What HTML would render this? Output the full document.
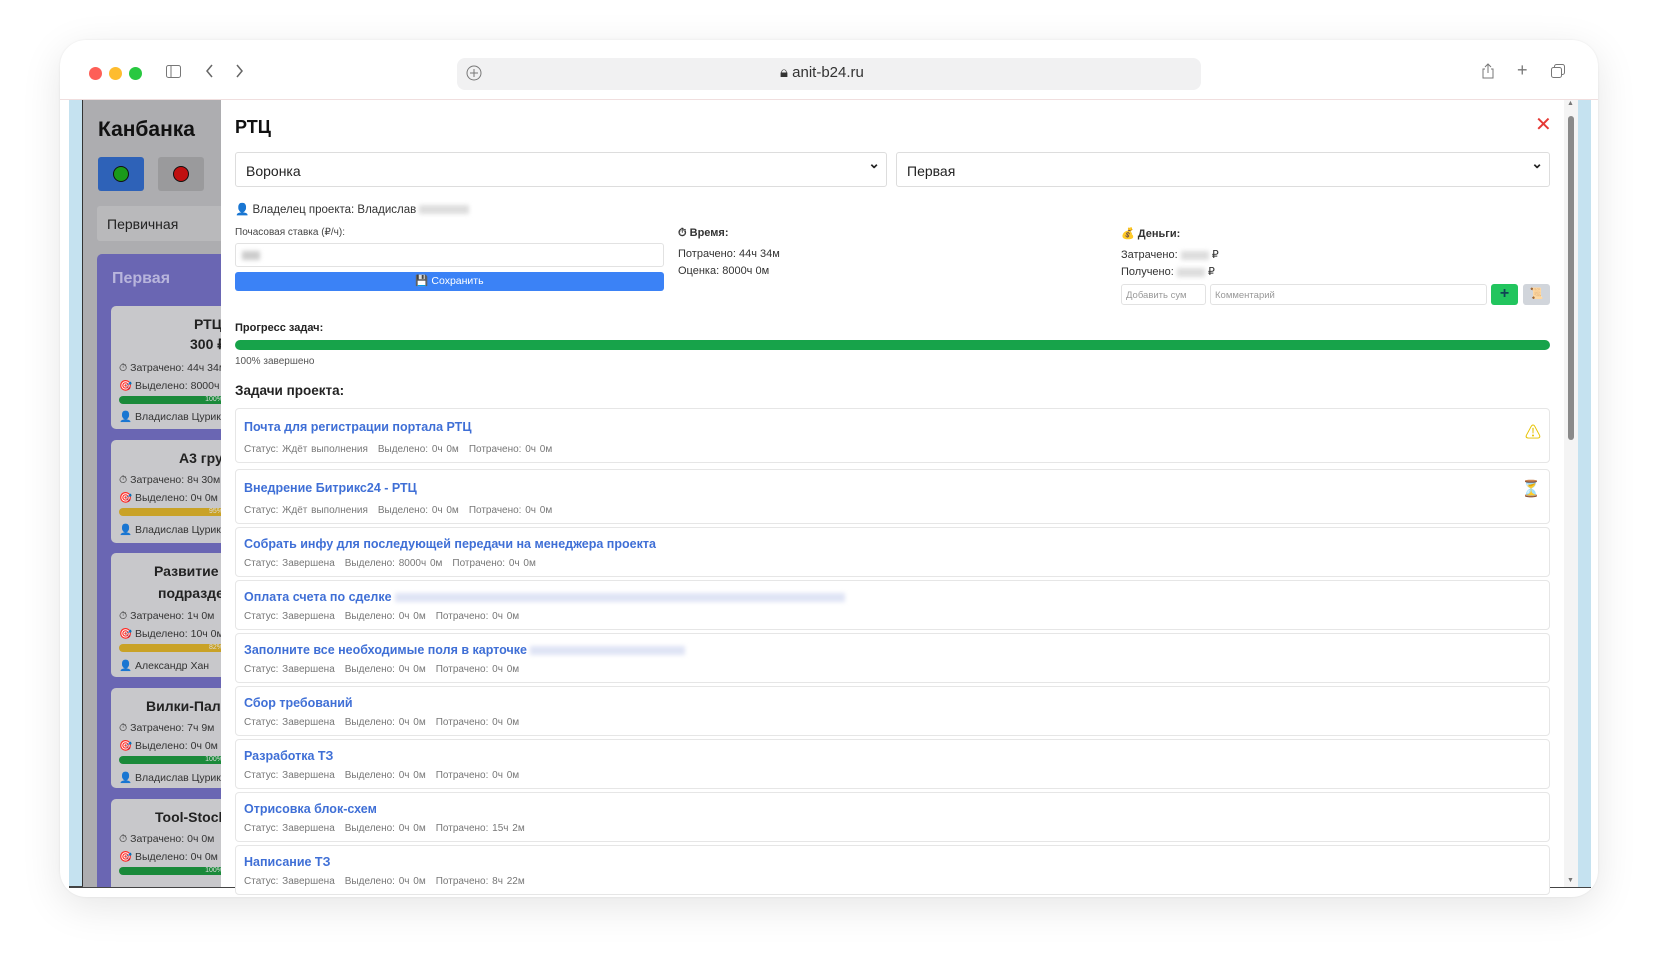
<!DOCTYPE html>
<html><head><meta charset="utf-8"><style>
*{box-sizing:border-box;margin:0;padding:0}
body{width:1656px;height:976px;background:#fff;font-family:"Liberation Sans","Noto Sans CJK SC",sans-serif;position:relative;overflow:hidden;color:#222}
.a{position:absolute}
.win{left:60px;top:40px;width:1538px;height:857px;border-radius:26px;background:#fff;box-shadow:0 10px 40px rgba(0,0,0,.10),0 0 2px rgba(0,0,0,.08);overflow:hidden}
.dot{width:13px;height:13px;border-radius:50%;top:67px}
.url{left:457px;top:58px;width:744px;height:32px;background:#f1f1f2;border-radius:8px}
.kb{left:83px;top:100px;width:138px;height:787px;background:#adadb0;overflow:hidden}
.card{position:absolute;left:28px;width:200px;background:#c8c8cb;border-radius:5px;font-size:10.5px;color:#333}
.card .t{position:absolute;font-weight:bold;font-size:14px;color:#222;white-space:nowrap}
.card .l{position:absolute;left:8px;white-space:nowrap}
.bar{position:absolute;left:8px;width:140px;height:8px;border-radius:4px;font-size:7px;color:#ddd;text-align:right;padding-right:36px;line-height:8px}
.modal{left:221px;top:100px;width:1357px;height:787px;background:#fff}
.sel{position:absolute;height:35px;border:1px solid #ddd;border-radius:3px;font-size:14px;padding:10px}
.sel:after{content:"⌄";position:absolute;right:6px;top:2px;font-size:14px;font-weight:bold}
.task{position:absolute;left:14px;width:1315px;border:1px solid #e6e6e6;border-radius:4px;background:#fff}
.task .n{position:absolute;left:8px;font-size:12.5px;color:#3f6fd6;font-weight:bold;white-space:nowrap}
.task .m{position:absolute;left:8px;font-size:10px;color:#777;white-space:nowrap;word-spacing:1px}
.m span{margin-right:10px}
.blur{display:inline-block;background:#dfe4f5;filter:blur(2px);height:9px;vertical-align:middle}
.s{font-size:11px;color:#333}
</style></head><body>
<div class="a win"></div>
<div class="a dot" style="left:89px;background:#fe5f57"></div>
<div class="a dot" style="left:109px;background:#febc2e"></div>
<div class="a dot" style="left:129px;background:#28c840"></div>
<svg class="a" style="left:166px;top:65px" width="15" height="13"><rect x=".5" y=".5" width="14" height="12" rx="2" fill="none" stroke="#777"/><line x1="5" y1="1" x2="5" y2="12" stroke="#777"/></svg>
<svg class="a" style="left:205px;top:64px" width="10" height="14"><path d="M7 1L2 7l5 6" fill="none" stroke="#666" stroke-width="1.5"/></svg>
<svg class="a" style="left:235px;top:64px" width="10" height="14"><path d="M2 1l5 6-5 6" fill="none" stroke="#666" stroke-width="1.5"/></svg>
<div class="a url"></div>
<svg class="a" style="left:466px;top:65px" width="16" height="16"><circle cx="8" cy="8" r="7" fill="none" stroke="#777"/><path d="M8 4v8M4 8h8" stroke="#777"/></svg>
<div class="a" style="left:780px;top:64px;font-size:15px;color:#333">🔒︎<span style="font-size:15px"> anit-b24.ru</span></div>
<svg class="a" style="left:1481px;top:63px" width="14" height="16"><path d="M4 6H2v9h10V6h-2M7 1v9M4 4l3-3 3 3" fill="none" stroke="#777"/></svg>
<div class="a" style="left:1517px;top:60px;font-size:18px;color:#777">+</div>
<svg class="a" style="left:1551px;top:64px" width="14" height="14"><rect x="3.5" y=".5" width="10" height="10" rx="2" fill="none" stroke="#777"/><rect x=".5" y="3.5" width="10" height="10" rx="2" fill="#fff" stroke="#777"/></svg>
<div class="a" style="left:60px;top:99px;width:1538px;height:1px;background:#f0dede"></div>
<div class="a" style="left:69px;top:100px;width:14px;height:787px;background:#c5e2f0"></div>
<div class="a" style="left:82px;top:100px;width:2px;height:787px;background:#333"></div>
<div class="a" style="left:69px;top:886px;width:1522px;height:2px;background:#444"></div>
<div class="a" style="left:1578px;top:100px;width:13px;height:787px;background:#c5e2f0"></div>
<div class="a kb">
 <div class="a" style="left:15px;top:18px;font-size:21px;font-weight:bold;color:#111">Канбанка</div>
 <div class="a" style="left:15px;top:57px;width:46px;height:34px;background:#2e62b8;border-radius:3px"><div class="a" style="left:15px;top:9px;width:16px;height:16px;border-radius:50%;background:#1a9a1a;border:1.5px solid #111"></div></div>
 <div class="a" style="left:75px;top:57px;width:46px;height:34px;background:#9a9a9c;border-radius:3px"><div class="a" style="left:15px;top:9px;width:16px;height:16px;border-radius:50%;background:#c01010;border:1.5px solid #111"></div></div>
 <div class="a" style="left:14px;top:106px;width:140px;height:35px;background:#b9b9bb;border-radius:3px;font-size:14px;padding:10px 10px;color:#222">Первичная</div>
 <div class="a" style="left:14px;top:154px;width:140px;height:700px;background:#6a66b3;border-radius:5px"></div>
 <div class="a" style="left:29px;top:170px;font-size:16px;font-weight:bold;color:#b8b5dc">Первая</div>
 <div class="card" style="top:206px;height:123px"><div class="t" style="top:10px;left:83px">РТЦ</div><div class="t" style="top:30px;left:79px">300 ₽</div><div class="l" style="top:56px">⏱ Затрачено: 44ч 34м</div><div class="l" style="top:73px">🎯 Выделено: 8000ч 0м</div><div class="bar" style="top:90px;background:#1a8a3a">100%</div><div class="l" style="top:104px">👤 Владислав Цурико</div></div>
 <div class="card" style="top:340px;height:103px"><div class="t" style="top:10px;left:68px">А3 группа</div><div class="l" style="top:34px">⏱ Затрачено: 8ч 30м</div><div class="l" style="top:51px">🎯 Выделено: 0ч 0м</div><div class="bar" style="top:68px;background:#c9a227">95%</div><div class="l" style="top:83px">👤 Владислав Цурико</div></div>
 <div class="card" style="top:453px;height:124px"><div class="t" style="top:10px;left:43px">Развитие с</div><div class="t" style="top:32px;left:47px">подразделения</div><div class="l" style="top:57px">⏱ Затрачено: 1ч 0м</div><div class="l" style="top:74px">🎯 Выделено: 10ч 0м</div><div class="bar" style="top:91px;background:#c9a227">82%</div><div class="l" style="top:106px">👤 Александр Хан</div></div>
 <div class="card" style="top:588px;height:100px"><div class="t" style="top:10px;left:35px">Вилки-Палки</div><div class="l" style="top:34px">⏱ Затрачено: 7ч 9м</div><div class="l" style="top:51px">🎯 Выделено: 0ч 0м</div><div class="bar" style="top:68px;background:#1a8a3a">100%</div><div class="l" style="top:83px">👤 Владислав Цурико</div></div>
 <div class="card" style="top:699px;height:100px"><div class="t" style="top:10px;left:44px">Tool-Stock</div><div class="l" style="top:34px">⏱ Затрачено: 0ч 0м</div><div class="l" style="top:51px">🎯 Выделено: 0ч 0м</div><div class="bar" style="top:68px;background:#1a8a3a">100%</div></div>
</div>
<div class="a modal">
 <div class="a" style="left:14px;top:17px;font-size:18px;font-weight:bold;color:#111">РТЦ</div>
 <div class="a" style="left:1314px;top:12px;font-size:20px;color:#e53935">✕</div>
 <div class="sel" style="left:14px;top:52px;width:652px">Воронка</div>
 <div class="sel" style="left:675px;top:52px;width:654px">Первая</div>
 <div class="a s" style="left:14px;top:102px;font-size:11.5px">👤 Владелец проекта: Владислав <span class="blur" style="width:50px;background:#ddd"></span></div>
 <div class="a" style="left:14px;top:127px;font-size:10px;color:#444">Почасовая ставка (₽/ч):</div>
 <div class="a" style="left:14px;top:143px;width:429px;height:24px;border:1px solid #e2e2e2;border-radius:3px"><span class="blur" style="position:absolute;left:6px;top:7px;width:18px;background:#ccc"></span></div>
 <div class="a" style="left:14px;top:172px;width:429px;height:19px;background:#3b82f6;border-radius:3px;color:#fff;font-size:10.5px;text-align:center;line-height:19px">💾 Сохранить</div>
 <div class="a s" style="left:457px;top:127px;font-weight:bold">⏱ Время:</div>
 <div class="a s" style="left:457px;top:148px">Потрачено: 44ч 34м</div>
 <div class="a s" style="left:457px;top:165px">Оценка: 8000ч 0м</div>
 <div class="a s" style="left:900px;top:127px;font-weight:bold">💰 Деньги:</div>
 <div class="a s" style="left:900px;top:148px">Затрачено: <span class="blur" style="width:28px;background:#ddd"></span> ₽</div>
 <div class="a s" style="left:900px;top:165px">Получено: <span class="blur" style="width:28px;background:#ddd"></span> ₽</div>
 <div class="a" style="left:900px;top:184px;width:85px;height:21px;border:1px solid #e2e2e2;border-radius:3px;font-size:9.5px;color:#999;padding:5px 4px">Добавить сум</div>
 <div class="a" style="left:989px;top:184px;width:277px;height:21px;border:1px solid #e2e2e2;border-radius:3px;font-size:9.5px;color:#999;padding:5px 4px">Комментарий</div>
 <div class="a" style="left:1270px;top:184px;width:27px;height:21px;background:#22c55e;border-radius:3px;color:#145;font-size:16px;text-align:center;line-height:20px;font-weight:bold">+</div>
 <div class="a" style="left:1302px;top:184px;width:27px;height:21px;background:#d1d5db;border-radius:3px;font-size:11px;text-align:center;line-height:21px">📜</div>
 <div class="a s" style="left:14px;top:222px;font-weight:bold;color:#222">Прогресс задач:</div>
 <div class="a" style="left:14px;top:240px;width:1315px;height:10px;border-radius:5px;background:#17a34a"></div>
 <div class="a" style="left:14px;top:256px;font-size:10px;color:#555">100% завершено</div>
 <div class="a" style="left:14px;top:283px;font-size:13.5px;font-weight:bold;color:#222">Задачи проекта:</div>

 <div class="task" style="top:308px;height:55px"><div class="n" style="top:11px">Почта для регистрации портала РТЦ</div><div class="m" style="top:35px"><span>Статус: Ждёт выполнения</span><span>Выделено: 0ч 0м</span><span>Потрачено: 0ч 0м</span></div><div class="a" style="right:8px;top:10px;font-size:16px;color:#e6c200">⚠</div></div>
 <div class="task" style="top:369px;height:55px"><div class="n" style="top:11px">Внедрение Битрикс24 - РТЦ</div><div class="m" style="top:35px"><span>Статус: Ждёт выполнения</span><span>Выделено: 0ч 0м</span><span>Потрачено: 0ч 0м</span></div><div class="a" style="right:8px;top:9px;font-size:16px;color:#b45309">⏳</div></div>
 <div class="task" style="top:427px;height:50px"><div class="n" style="top:9px">Собрать инфу для последующей передачи на менеджера проекта</div><div class="m" style="top:30px"><span>Статус: Завершена</span><span>Выделено: 8000ч 0м</span><span>Потрачено: 0ч 0м</span></div></div>
 <div class="task" style="top:480px;height:50px"><div class="n" style="top:9px">Оплата счета по сделке <span class="blur" style="width:450px"></span></div><div class="m" style="top:30px"><span>Статус: Завершена</span><span>Выделено: 0ч 0м</span><span>Потрачено: 0ч 0м</span></div></div>
 <div class="task" style="top:533px;height:50px"><div class="n" style="top:9px">Заполните все необходимые поля в карточке <span class="blur" style="width:155px"></span></div><div class="m" style="top:30px"><span>Статус: Завершена</span><span>Выделено: 0ч 0м</span><span>Потрачено: 0ч 0м</span></div></div>
 <div class="task" style="top:586px;height:50px"><div class="n" style="top:9px">Сбор требований</div><div class="m" style="top:30px"><span>Статус: Завершена</span><span>Выделено: 0ч 0м</span><span>Потрачено: 0ч 0м</span></div></div>
 <div class="task" style="top:639px;height:50px"><div class="n" style="top:9px">Разработка ТЗ</div><div class="m" style="top:30px"><span>Статус: Завершена</span><span>Выделено: 0ч 0м</span><span>Потрачено: 0ч 0м</span></div></div>
 <div class="task" style="top:692px;height:50px"><div class="n" style="top:9px">Отрисовка блок-схем</div><div class="m" style="top:30px"><span>Статус: Завершена</span><span>Выделено: 0ч 0м</span><span>Потрачено: 15ч 2м</span></div></div>
 <div class="task" style="top:745px;height:50px"><div class="n" style="top:9px">Написание ТЗ</div><div class="m" style="top:30px"><span>Статус: Завершена</span><span>Выделено: 0ч 0м</span><span>Потрачено: 8ч 22м</span></div></div>
 <div class="a" style="left:1343px;top:0;width:14px;height:787px;background:#f4f4f4"></div>
 <div class="a" style="left:1347px;top:16px;width:6px;height:324px;background:#8a8a8a;border-radius:3px"></div>
 <div class="a" style="left:1346px;top:0;font-size:7px;color:#777">▲</div>
 <div class="a" style="left:1346px;top:777px;font-size:7px;color:#777">▼</div>
</div>
</body></html>
